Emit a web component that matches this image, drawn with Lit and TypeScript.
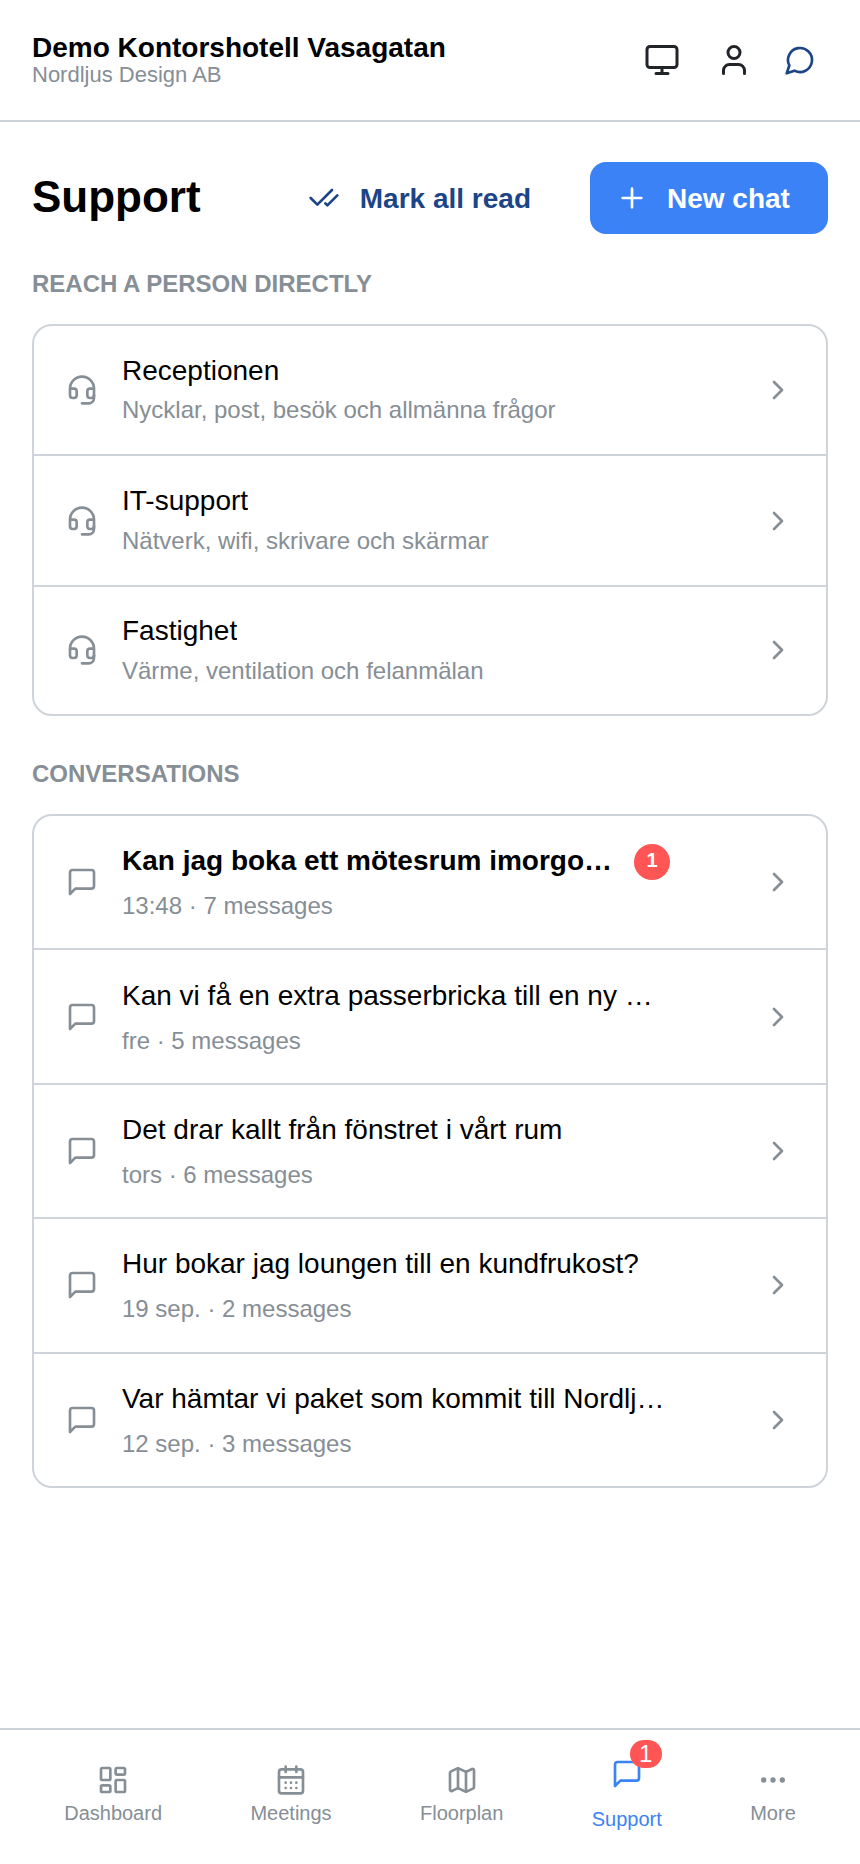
import { LitElement, html, css, svg } from "lit";
import { customElement } from "lit/decorators.js";

const icon = (body: unknown, size = 32) => html`<svg
  width=${size}
  height=${size}
  viewBox="0 0 24 24"
  fill="none"
  stroke="currentColor"
  stroke-width="2"
  stroke-linecap="round"
  stroke-linejoin="round"
>${body}</svg>`;

const headset = svg`<path d="M3 11h3a2 2 0 0 1 2 2v3a2 2 0 0 1-2 2H5a2 2 0 0 1-2-2v-5Zm0 0a9 9 0 1 1 18 0m0 0v5a2 2 0 0 1-2 2h-1a2 2 0 0 1-2-2v-3a2 2 0 0 1 2-2h3Z"/><path d="M21 16v2a4 4 0 0 1-4 4h-5"/>`;
const message = svg`<path d="M21 15a2 2 0 0 1-2 2H7l-4 4V5a2 2 0 0 1 2-2h14a2 2 0 0 1 2 2z"/>`;
const chevron = svg`<path d="m9 18 6-6-6-6"/>`;
const monitor = svg`<rect x="2" y="3" width="20" height="14" rx="2"/><path d="M8 21h8M12 17v4"/>`;
const user = svg`<path d="M19 21v-2a4 4 0 0 0-4-4H9a4 4 0 0 0-4 4v2"/><circle cx="12" cy="7" r="4"/>`;
const bubble = svg`<path d="M7.900 20A9 9 0 1 0 4 16.100L2 22Z"/>`;
const checks = svg`<path d="M18 6 7 17l-5-5"/><path d="m22 10-7.500 7.500L13 16"/>`;
const plus = svg`<path d="M5 12h14M12 5v14"/>`;
const dashboard = svg`<rect x="3" y="3" width="7" height="9" rx="1"/><rect x="14" y="3" width="7" height="5" rx="1"/><rect x="14" y="12" width="7" height="9" rx="1"/><rect x="3" y="16" width="7" height="5" rx="1"/>`;
const calendar = svg`<path d="M8 2v4M16 2v4"/><rect x="3" y="4" width="18" height="18" rx="2"/><path d="M3 10h18M8 14h.01M12 14h.01M16 14h.01M8 18h.01M12 18h.01M16 18h.01"/>`;
const map = svg`<path d="M14.106 5.553a2 2 0 0 0 1.788 0l3.659-1.830A1 1 0 0 1 21 4.619v12.764a1 1 0 0 1-.553.894l-4.553 2.277a2 2 0 0 1-1.788 0l-4.212-2.106a2 2 0 0 0-1.788 0l-3.659 1.830A1 1 0 0 1 3 19.381V6.618a1 1 0 0 1 .553-.894l4.553-2.277a2 2 0 0 1 1.788 0z"/><path d="M15 5.764v15M9 3.236v15"/>`;
const dots = svg`<circle cx="12" cy="12" r="1"/><circle cx="19" cy="12" r="1"/><circle cx="5" cy="12" r="1"/>`;

const people = [
  ["Receptionen", "Nycklar, post, besök och allmänna frågor"],
  ["IT-support", "Nätverk, wifi, skrivare och skärmar"],
  ["Fastighet", "Värme, ventilation och felanmälan"],
];

const chats = [
  { title: "Kan jag boka ett mötesrum imorgon förmiddag?", meta: "13:48 · 7 messages", unread: 1 },
  { title: "Kan vi få en extra passerbricka till en ny kollega?", meta: "fre · 5 messages", unread: 0 },
  { title: "Det drar kallt från fönstret i vårt rum", meta: "tors · 6 messages", unread: 0 },
  { title: "Hur bokar jag loungen till en kundfrukost?", meta: "19 sep. · 2 messages", unread: 0 },
  { title: "Var hämtar vi paket som kommit till Nordljus Design?", meta: "12 sep. · 3 messages", unread: 0 },
];

const tabs = [
  { label: "Dashboard", icon: dashboard },
  { label: "Meetings", icon: calendar },
  { label: "Floorplan", icon: map },
  { label: "Support", icon: message, active: true, badge: 1 },
  { label: "More", icon: dots },
];

@customElement("app-root")
export class AppRoot extends LitElement {
  static styles = css`
    :host {
      display: flex;
      flex-direction: column;
      height: 1864px;
      background: #fff;
      color: #000;
      font-family: "Liberation Sans", Arial, sans-serif;
    }
    svg {
      display: block;
      flex: none;
    }
    .topbar {
      display: flex;
      align-items: center;
      justify-content: space-between;
      height: 120px;
      padding: 0 32px;
      border-bottom: 2px solid #ced4da;
    }
    .org-name {
      font-size: 28px;
      font-weight: 700;
      line-height: 30px;
    }
    .org-sub {
      font-size: 22px;
      line-height: 24px;
      color: #868e96;
    }
    .top-icons {
      display: flex;
      align-items: center;
      color: #212529;
    }
    .top-icons .user {
      margin-left: 36px;
    }
    .top-icons .chat {
      color: #1c4587;
      margin: 0 12px 0 32px;
    }
    main {
      flex: 1;
      padding: 40px 32px 0;
    }
    .page-head {
      display: flex;
      align-items: center;
      height: 72px;
    }
    h1 {
      margin: 0 0 2px;
      font-size: 44px;
      font-weight: 700;
      flex: 1;
    }
    .mark-read {
      display: flex;
      align-items: center;
      gap: 20px;
      margin-right: 59px;
      font-size: 28px;
      font-weight: 700;
      color: #1c4587;
    }
    .new-chat {
      display: flex;
      align-items: center;
      gap: 19px;
      box-sizing: border-box;
      width: 238px;
      height: 72px;
      padding-left: 26px;
      border-radius: 16px;
      background: #3b82f6;
      color: #fff;
      font-size: 28px;
      font-weight: 700;
    }
    .btn-text {
      margin-top: 2px;
    }
    .section-label {
      margin-top: 35px;
      font-size: 24px;
      line-height: 30px;
      font-weight: 700;
      color: #868e96;
    }
    .card {
      margin-top: 25px;
      border: 2px solid #ced4da;
      border-radius: 20px;
    }
    .section-label.second {
      margin-top: 43px;
    }
    .row {
      display: flex;
      align-items: center;
      padding: 0 32px;
      gap: 24px;
      height: 128.4px;
      border-bottom: 2px solid #ced4da;
      color: #868e96;
    }
    .row:last-child {
      height: 127.2px;
      border-bottom: none;
    }
    .row.chat {
      height: 132.4px;
    }
    .row-body {
      flex: 1;
      min-width: 0;
      margin-bottom: 2px;
    }
    .row.chat .row-body {
      margin-bottom: 0;
    }
    .row-title {
      display: flex;
      align-items: center;
      gap: 16px;
      max-width: 548px;
      height: 36px;
      font-size: 28px;
      line-height: 36px;
      color: #000;
    }
    .row-title span {
      max-width: 544px;
      overflow: hidden;
      white-space: nowrap;
      text-overflow: ellipsis;
    }
    .row-title.unread {
      font-weight: 700;
    }
    .row-sub {
      margin-top: 6.4px;
      font-size: 24px;
      line-height: 30px;
      color: #868e96;
    }
    .row.chat .row-sub {
      margin-top: 12px;
    }
    .count {
      flex: none;
      display: flex;
      align-items: center;
      justify-content: center;
      margin: 1px 0 0 2px;
      width: 36px;
      height: 36px;
      border-radius: 50%;
      background: #ff5555;
      color: #fff;
      font-size: 20px;
      font-weight: 700;
      line-height: 32px;
      padding-bottom: 4px;
      box-sizing: border-box;
    }
    .tabbar {
      display: flex;
      justify-content: space-around;
      align-items: flex-start;
      height: 134px;
      padding: 0 20px;
      border-top: 2px solid #ced4da;
    }
    .tab {
      position: relative;
      display: flex;
      flex-direction: column;
      align-items: center;
      gap: 3px;
      padding-top: 34px;
      font-size: 20px;
      line-height: 28px;
      color: #868e96;
    }
    .tab.active {
      color: #3b82f6;
      padding-top: 28px;
      gap: 15px;
    }
    .tab-badge {
      position: absolute;
      top: 10px;
      left: 38px;
      display: flex;
      align-items: center;
      justify-content: center;
      width: 32px;
      height: 28px;
      border-radius: 14px;
      background: #ff5555;
      color: #fff;
      font-size: 24px;
    }
  `;

  render() {
    return html`
      <header class="topbar">
        <div>
          <div class="org-name">Demo Kontorshotell Vasagatan</div>
          <div class="org-sub">Nordljus Design AB</div>
        </div>
        <div class="top-icons">
          ${icon(monitor, 36)}
          <span class="user">${icon(user, 36)}</span>
          <span class="chat">${icon(bubble)}</span>
        </div>
      </header>
      <main>
        <div class="page-head">
          <h1>Support</h1>
          <div class="mark-read">${icon(checks)}<span class="btn-text">Mark all read</span></div>
          <div class="new-chat">${icon(plus)}<span class="btn-text">New chat</span></div>
        </div>
        <div class="section-label">REACH A PERSON DIRECTLY</div>
        <div class="card">
          ${people.map(
            ([title, sub]) => html`
              <div class="row">
                ${icon(headset)}
                <div class="row-body">
                  <div class="row-title"><span>${title}</span></div>
                  <div class="row-sub">${sub}</div>
                </div>
                ${icon(chevron)}
              </div>
            `,
          )}
        </div>
        <div class="section-label second">CONVERSATIONS</div>
        <div class="card">
          ${chats.map(
            (c) => html`
              <div class="row chat">
                ${icon(message)}
                <div class="row-body">
                  <div class="row-title ${c.unread ? "unread" : ""}">
                    <span>${c.title}</span>
                    ${c.unread ? html`<div class="count">${c.unread}</div>` : ""}
                  </div>
                  <div class="row-sub">${c.meta}</div>
                </div>
                ${icon(chevron)}
              </div>
            `,
          )}
        </div>
      </main>
      <nav class="tabbar">
        ${tabs.map(
          (t) => html`
            <div class="tab ${t.active ? "active" : ""}">
              ${icon(t.icon)}
              ${t.badge ? html`<div class="tab-badge">${t.badge}</div>` : ""}
              <span>${t.label}</span>
            </div>
          `,
        )}
      </nav>
    `;
  }
}
